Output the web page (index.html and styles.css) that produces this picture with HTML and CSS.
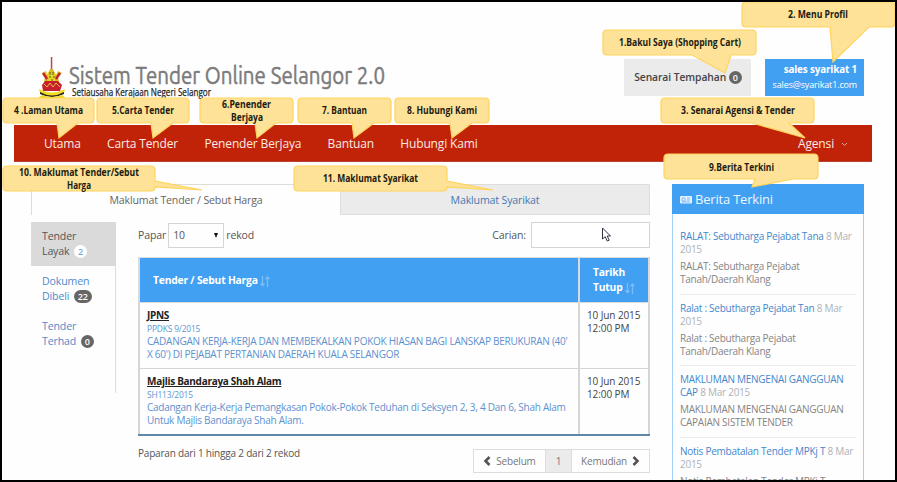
FILE: index.html
```html
<!DOCTYPE html>
<html lang="ms">
<head>
<meta charset="utf-8">
<title>Sistem Tender Online Selangor 2.0</title>
<link rel="stylesheet" href="styles.css">
</head>
<body>
<div class="frame">
  <header class="header">
    <svg class="logo" width="360" height="48" viewBox="0 0 360 48">
      <g>
        <path d="M12.8 1h1.5v13h-1.5z" fill="#b54a50"/>
        <path d="M4 17l4-2 1 4 3-6h3l3 6 2-4 4 2-4 4 1 5h-15l1-5z" fill="#d8bc1c"/>
        <path d="M5 17l4 6M22 17l-4 6" stroke="#c8232c" stroke-width="2.4"/>
        <path d="M10 17h7v8h-7z" fill="#e7d321"/>
        <path d="M12 16v3M15 16v3M11 21h2M15 21h2M13 24h2" stroke="#6b5520"/>
        <path d="M4 29l3-4h13l4 4-2 6H5z" fill="#c81f2e"/>
        <path d="M6 28l3 3 3-4 3 4 3-4 4 4" stroke="#e3bf45" fill="none"/>
        <path d="M1 33q13 7 26 0l-1 4q-12 7-24 0z" fill="#f1dc22"/>
        <path d="M2 36q12 7 24 0v2q-12 6-24 0z" fill="#2b251b"/>
        <path d="M0 42l4-3q10 4 20 0l4 3v4H0z" fill="#edda23"/>
      </g>
      <text class="logo-title" x="31" y="28" textLength="316" lengthAdjust="spacingAndGlyphs">Sistem Tender Online Selangor 2.0</text>
      <text class="logo-sub" x="34" y="40" textLength="139" lengthAdjust="spacingAndGlyphs">Setiausaha Kerajaan Negeri Selangor</text>
    </svg>
    <div class="cart">Senarai Tempahan <span class="badge">0</span></div>
    <div class="profile"><b>sales syarikat 1</b><span>sales@syarikat1.com</span></div>
  </header>

  <nav class="nav">
    <a>Utama</a><a>Carta Tender</a><a>Penender Berjaya</a><a>Bantuan</a><a>Hubungi Kami</a>
    <a class="agency">Agensi <svg width="7" height="5" viewBox="0 0 7 5"><path d="M1 1l2.5 2.5L6 1" fill="none" stroke="#e3a79c"/></svg></a>
  </nav>

  <div class="content">
    <main class="main">
      <div class="tabs"><a class="tab active">Maklumat Tender / Sebut Harga</a><a class="tab">Maklumat Syarikat</a></div>
      <div class="columns">
        <aside class="side">
          <a class="side-item selected">Tender<br>Layak <span class="badge light">2</span></a>
          <a class="side-item">Dokumen<br>Dibeli <span class="badge">22</span></a>
          <a class="side-item">Tender<br>Terhad <span class="badge">0</span></a>
        </aside>
        <section class="list">
          <div class="tools">
            <span>Papar</span><span class="select">10<i></i></span><span>rekod</span>
            <label class="search">Carian:<span class="input"></span></label>
          </div>
          <table class="table">
            <thead>
              <tr>
                <th>Tender / Sebut Harga <svg width="10" height="11" viewBox="0 0 10 11"><path d="M2.5 0v9M.5 7.500l2 2 2-2M7.500 11V1M5.500 3l2-2 2 2" fill="none" stroke="#7dbdf7" stroke-width="1.300"/></svg></th>
                <th>Tarikh<br>Tutup <svg width="10" height="11" viewBox="0 0 10 11"><path d="M2.5 0v9M.5 7.500l2 2 2-2M7.500 11V1M5.500 3l2-2 2 2" fill="none" stroke="#7dbdf7" stroke-width="1.300"/></svg></th>
              </tr>
            </thead>
            <tbody>
              <tr>
                <td><b>JPNS</b><small>PPDKS 9/2015</small><span>CADANGAN KERJA-KERJA DAN MEMBEKALKAN POKOK HIASAN BAGI LANSKAP BERUKURAN (40'</span><span>X 60') DI PEJABAT PERTANIAN DAERAH KUALA SELANGOR</span></td>
                <td>10 Jun 2015<br>12:00 PM</td>
              </tr>
              <tr>
                <td><b>Majlis Bandaraya Shah Alam</b><small>SH113/2015</small><span>Cadangan Kerja-Kerja Pemangkasan Pokok-Pokok Teduhan di Seksyen 2, 3, 4 Dan 6, Shah Alam</span><span>Untuk Majlis Bandaraya Shah Alam.</span></td>
                <td>10 Jun 2015<br>12:00 PM</td>
              </tr>
            </tbody>
          </table>
          <div class="foot">
            <span>Paparan dari 1 hingga 2 dari 2 rekod</span>
            <div class="pager">
              <a><svg width="8" height="10" viewBox="0 0 8 10"><path d="M6.500 1l-4 4 4 4" fill="none" stroke="#555" stroke-width="2.600"/></svg>Sebelum</a>
              <a class="current">1</a>
              <a>Kemudian<svg width="8" height="10" viewBox="0 0 8 10"><path d="M1.500 1l4 4-4 4" fill="none" stroke="#555" stroke-width="2.600"/></svg></a>
            </div>
          </div>
        </section>
      </div>
    </main>
    <aside class="news">
      <h2><svg width="12" height="9" viewBox="0 0 12 9"><rect y="1" width="12" height="7.500" rx="1" fill="#e4f2fe"/><path d="M2 3h3v3H2zM7 3h3M7 5h3M2 7h8" fill="none" stroke="#62aef3" stroke-width=".8"/></svg>Berita Terkini</h2>
      <article><p><a>RALAT: Sebutharga Pejabat Tana</a> 8 Mar<br>2015</p><p class="body">RALAT: Sebutharga Pejabat<br>Tanah/Daerah Klang</p></article>
      <article><p><a>Ralat : Sebutharga Pejabat Tan</a> 8 Mar<br>2015</p><p class="body">Ralat : Sebutharga Pejabat<br>Tanah/Daerah Klang</p></article>
      <article><p><a>MAKLUMAN MENGENAI GANGGUAN<br>CAP</a> 8 Mar 2015</p><p class="body">MAKLUMAN MENGENAI GANGGUAN<br>CAPAIAN SISTEM TENDER</p></article>
      <article><p><a>Notis Pembatalan Tender MPKj T</a> 8 Mar<br>2015</p><p class="body">Notis Pembatalan Tender MPKj T</p></article>
    </aside>
  </div>

  <svg class="callouts" width="897" height="482" viewBox="0 0 897 482">
    <g class="bubble">
      <path d="M607 30H752Q756 30 756 34V51Q756 55 752 55H731L725 73 692 55H607Q603 55 603 51V34Q603 30 607 30Z"/>
      <path d="M746 2H891Q895 2 895 6V23Q895 27 891 27H869L833 62 830 27H746Q742 27 742 23V6Q742 2 746 2Z"/>
      <path d="M665 98H810Q814 98 814 102V119Q814 123 810 123H789L805 138 752 123H665Q661 123 661 119V102Q661 98 665 98Z"/>
      <path d="M7 98H90Q94 98 94 102V119Q94 123 90 123H78L59 138 57 123H7Q3 123 3 119V102Q3 98 7 98Z"/>
      <path d="M101 98H185Q189 98 189 102V119Q189 123 185 123H173L153 138 151 123H101Q97 123 97 119V102Q97 98 101 98Z"/>
      <path d="M204 98H289Q293 98 293 102V119Q293 123 289 123H276L257 138 255 123H204Q200 123 200 119V102Q200 98 204 98Z"/>
      <path d="M302 98H387Q391 98 391 102V119Q391 123 387 123H374L354 138 352 123H302Q298 123 298 119V102Q298 98 302 98Z"/>
      <path d="M399 98H485Q489 98 489 102V119Q489 123 485 123H472L452 138 450 123H399Q395 123 395 119V102Q395 98 399 98Z"/>
      <path d="M668 154H814Q818 154 818 158V175Q818 179 814 179H793L752 187 755 179H668Q664 179 664 175V158Q664 154 668 154Z"/>
      <path d="M7 166H151Q155 166 155 170V181L202 190 155 187Q155 191 151 191H7Q3 191 3 187V170Q3 166 7 166Z"/>
      <path d="M298 166H443Q447 166 447 170V181L493 190 447 187Q447 191 443 191H298Q294 191 294 187V170Q294 166 298 166Z"/>
    </g>
    <g class="label">
      <text x="619" y="46" textLength="122" lengthAdjust="spacingAndGlyphs">1.Bakul Saya (Shopping Cart)</text>
      <text x="788" y="18" textLength="60" lengthAdjust="spacingAndGlyphs">2. Menu Profil</text>
      <text x="681" y="114" textLength="114" lengthAdjust="spacingAndGlyphs">3. Senarai Agensi &amp; Tender</text>
      <text x="14" y="114" textLength="69" lengthAdjust="spacingAndGlyphs">4 .Laman Utama</text>
      <text x="112" y="114" textLength="62" lengthAdjust="spacingAndGlyphs">5.Carta Tender</text>
      <text x="222" y="108" textLength="49" lengthAdjust="spacingAndGlyphs">6.Penender</text>
      <text x="231" y="121" textLength="32" lengthAdjust="spacingAndGlyphs">Berjaya</text>
      <text x="322" y="114" textLength="45" lengthAdjust="spacingAndGlyphs">7. Bantuan</text>
      <text x="407" y="114" textLength="70" lengthAdjust="spacingAndGlyphs">8. Hubungi Kami</text>
      <text x="709" y="171" textLength="65" lengthAdjust="spacingAndGlyphs">9.Berita Terkini</text>
      <text x="19" y="176" textLength="120" lengthAdjust="spacingAndGlyphs">10. Maklumat Tender/Sebut</text>
      <text x="67" y="189" textLength="24" lengthAdjust="spacingAndGlyphs">Harga</text>
      <text x="323" y="182" textLength="95" lengthAdjust="spacingAndGlyphs">11. Maklumat Syarikat</text>
    </g>
    <path d="M602.500 228v11l2.700-2.300 2 4.300 2-.8-2-4.200h3.300z" fill="#fff" stroke="#334" stroke-width="1"/>
  </svg>
</div>
</body>
</html>
```
FILE: styles.css
```css
* { box-sizing: border-box; }
body { margin: 0; font: 11px/13px "Open Sans", "Noto Sans", sans-serif; color: #555; background: #fff; }
p, h2 { margin: 0; }
.frame { position: relative; width: 897px; height: 482px; overflow: hidden; padding: 0 25px 0 14px; background: #fefefe; }
.frame::after { content: ""; position: absolute; inset: 0; border: 2px solid #000; }
.header { display: flex; height: 125px; padding: 56px 8px 0 24px; }
.logo { overflow: visible; }
.logo-title { font: 25px "Ubuntu", "Open Sans", sans-serif; fill: #7b7b7b; stroke: #7b7b7b; stroke-width: .5; }
.logo-sub { font: 10.5px "Open Sans", sans-serif; fill: #222; stroke: #222; stroke-width: .25; }
.cart { width: 127px; height: 37px; margin: 3px 14px 0 auto; padding-left: 1px; background: #ebebeb; color: #444; font-weight: 600; font-size: 10.300px; letter-spacing: -.07px; line-height: 37px; text-align: center; white-space: nowrap; }
.profile { display: flex; flex-direction: column; width: 99px; height: 37px; margin-top: 3px; padding: 3px 7px 0 0; text-align: right; color: #fff; background: #42a0f2; font-size: 9.900px; letter-spacing: -.15px; line-height: 15px; }
.profile span { font-size: 9px; }
.badge { display: inline-block; min-width: 13px; height: 13px; padding: 0 4px; border-radius: 7px; background: #666; color: #fff; font-size: 9px; font-weight: 600; line-height: 13px; text-align: center; }
.badge.light { background: #fff; color: #78a9dc; }
.nav { display: flex; gap: 26.300px; height: 37px; padding: 0 24px 0 30px; background: #c12308; color: #fbe9e6; font-size: 12px; letter-spacing: -.15px; line-height: 38px; border-bottom: 1px solid #b84230; white-space: nowrap; }
.agency { margin-left: auto; }
.agency svg { margin: 0 0 1px 4px; }
.content { display: flex; gap: 22px; padding: 22px 8px 0 17px; }
.main { width: 619px; }
.tabs { display: flex; height: 31px; line-height: 30px; text-align: center; font-size: 10.600px; letter-spacing: -.16px; }
.tab { flex: 1; border: 1px solid #ddd; background: #ebebeb; color: #4579b0; }
.tab.active { border-right: 0; border-bottom: 0; background: none; color: #666; }
.columns { display: flex; gap: 22px; padding-top: 7px; }
.side { width: 85px; height: 171px; border-right: 1px solid #ddd; font-size: 10.600px; letter-spacing: -.15px; line-height: 15px; }
.side-item { display: block; height: 45px; padding: 7px 0 0 11px; color: #4e8bca; white-space: nowrap; }
.side-item.selected { height: 44px; margin-right: -1px; background: #dadada; color: #555; margin-bottom: 1px; }
.side .badge { margin-left: 2px; }
.list { width: 512px; }
.tools { display: flex; align-items: center; gap: 2px; height: 26px; font-size: 10.500px; letter-spacing: -.1px; }
.select { display: flex; align-items: center; justify-content: space-between; width: 56px; height: 25px; padding: 0 5px 0 4px; border: 1px solid #d5d5d5; }
.select i { border: 2.500px solid transparent; border-top: 5px solid #111; border-bottom: 0; }
.search { display: flex; align-items: center; gap: 5px; margin-left: auto; }
.input { width: 119px; height: 26px; border: 1px solid #d5d5d5; background: #fff; }
.table { width: 512px; margin-top: 9px; table-layout: fixed; border-collapse: collapse; }
.table th:first-child { width: 440px; }
.table th { height: 45px; padding: 0 0 0 13px; text-align: left; color: #fff; background: #42a0f2; font-size: 10.300px; letter-spacing: -.2px; line-height: 15px; border: 1px solid #d7dbe0; border-width: 1px 2px; }
.table th svg { vertical-align: -3px; }
.table td { height: 66px; padding: 6px 0 0 7px; vertical-align: top; border: 1px solid #d5d5d5; border-width: 1px 2px; font-size: 10px; letter-spacing: -.1px; color: #444; white-space: nowrap; }
.table tr:last-child td { border-bottom: 2px solid #5f87a8; }
.table b, .table small, .table td span { display: block; }
.table b { font-size: 10px; letter-spacing: -.29px; color: #222; text-decoration: underline; }
.table small { font-size: 8.400px; letter-spacing: -.15px; color: #5d97d2; }
.table td span { color: #5d91ce; letter-spacing: -.26px; }
.foot { display: flex; justify-content: space-between; padding-top: 13px; font-size: 10px; letter-spacing: -.2px; }
.foot > span { margin-top: -2px; }
.pager { display: flex; height: 24px; color: #777; line-height: 22px; }
.pager a { display: flex; align-items: center; justify-content: center; gap: 5px; width: 73px; height: 24px; border: 1px solid #ddd; }
.pager a:last-child { width: 79px; }
.pager .current { width: 25px; border-width: 1px 0; background: #ebebeb; }
.news { width: 192px; height: 310px; border: 1px solid #a2d1fa; border-top: 0; font-size: 10px; letter-spacing: -.26px; white-space: nowrap; }
.news h2 { display: flex; align-items: center; gap: 3px; height: 30px; margin: 0 -1px 9px; padding-left: 8px; background: #42a0f2; color: #eaf5ff; font-size: 13px; letter-spacing: -.2px; font-weight: 400; }
.news article { height: 71.500px; margin: 0 7px; padding-top: 7px; border-bottom: 1px solid #e8edf0; color: #adb2b6; }
.news a { color: #4587cc; }
.news .body { margin-top: 4px; color: #858585; }
.callouts { position: absolute; left: 0; top: 0; }
.bubble { fill: #fee297; stroke: #ffd35c; stroke-width: 1.200; }
.label { font: 700 9.800px "Open Sans", sans-serif; fill: #1b1b12; }
```
